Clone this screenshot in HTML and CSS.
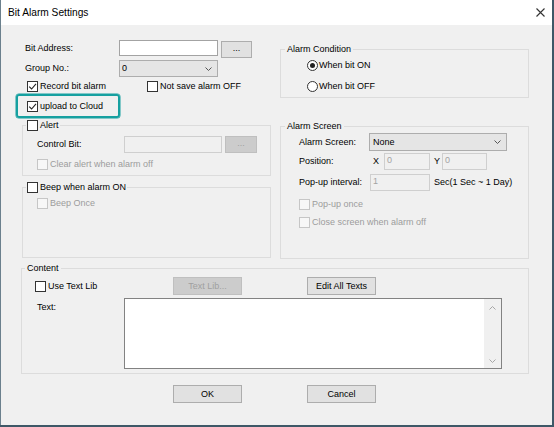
FILE: index.html
```html
<!DOCTYPE html>
<html>
<head>
<meta charset="utf-8">
<title>Bit Alarm Settings</title>
<link rel="stylesheet" href="styles.css">
</head>
<body>
<div class="window">
  <div class="titlebar">
    <span class="title">Bit Alarm Settings</span>
    <svg class="close" width="9" height="9" viewBox="0 0 9 9"><path d="M0.5 0.5L8.5 8.5M8.5 0.5L0.5 8.5" stroke="#333" stroke-width="1.1" fill="none"/></svg>
  </div>
  <div class="body">
    <div class="cols">
      <div class="lefttop">
        <div class="row r1">
          <span class="lbl w94">Bit Address:</span>
          <span class="input w99"></span>
          <span class="btn dots">...</span>
        </div>
        <div class="row r2">
          <span class="lbl w94">Group No.:</span>
          <span class="select w99"><span class="val">0</span><svg class="chev" width="7" height="4" viewBox="0 0 7 4"><path d="M0.5 0.5L3.5 3.5L6.5 0.5" stroke="#555" fill="none"/></svg></span>
        </div>
        <div class="row r3">
          <span class="chk first"><span class="cb"><svg width="9" height="9" viewBox="0 0 9 9"><path d="M1.2 4.6L3.6 7L8 1.8" stroke="#222" stroke-width="1.1" fill="none"/></svg></span>Record bit alarm</span>
          <span class="chk"><span class="cb"></span>Not save alarm OFF</span>
        </div>
        <div class="highlight">
          <span class="chk"><span class="cb"><svg width="9" height="9" viewBox="0 0 9 9"><path d="M1.2 4.6L3.6 7L8 1.8" stroke="#222" stroke-width="1.1" fill="none"/></svg></span>upload to Cloud</span>
        </div>
      </div>
      <fieldset class="grp cond">
        <legend>Alarm Condition</legend>
        <div class="gbody">
          <span class="radio"><span class="rb on"></span>When bit ON</span>
          <span class="radio second"><span class="rb"></span>When bit OFF</span>
        </div>
      </fieldset>
    </div>

    <div class="cols mid">
      <div class="leftmid">
        <fieldset class="grp alert">
          <legend><span class="chk"><span class="cb"></span>Alert</span></legend>
          <div class="gbody">
            <div class="row ctrl">
              <span class="lbl w87">Control Bit:</span>
              <span class="input dis w98"></span>
              <span class="btn disbtn dots2">...</span>
            </div>
            <div class="row clear">
              <span class="chk dis"><span class="cb"></span>Clear alert when alarm off</span>
            </div>
          </div>
        </fieldset>
        <fieldset class="grp beep">
          <legend><span class="chk"><span class="cb"></span>Beep when alarm ON</span></legend>
          <div class="gbody">
            <div class="row beeponce">
              <span class="chk dis"><span class="cb"></span>Beep Once</span>
            </div>
          </div>
        </fieldset>
      </div>
      <fieldset class="grp screen">
        <legend>Alarm Screen</legend>
        <div class="gbody">
          <div class="row s1">
            <span class="lbl w70">Alarm Screen:</span>
            <span class="select w138"><span class="val">None</span><svg class="chev" width="7" height="4" viewBox="0 0 7 4"><path d="M0.5 0.5L3.5 3.5L6.5 0.5" stroke="#555" fill="none"/></svg></span>
          </div>
          <div class="row s2">
            <span class="lbl w74">Position:</span>
            <span class="axis wx">X</span>
            <span class="input dis w46"><span class="dval">0</span></span>
            <span class="axis wy">Y</span>
            <span class="input dis w45"><span class="dval">0</span></span>
          </div>
          <div class="row s3">
            <span class="lbl w71">Pop-up interval:</span>
            <span class="input dis w60"><span class="dval">1</span></span>
            <span class="unit">Sec(1 Sec ~ 1 Day)</span>
          </div>
          <div class="row s4">
            <span class="chk dis"><span class="cb"></span>Pop-up once</span>
          </div>
          <div class="row s5">
            <span class="chk dis"><span class="cb"></span>Close screen when alarm off</span>
          </div>
        </div>
      </fieldset>
    </div>

    <fieldset class="grp content">
      <legend>Content</legend>
      <div class="gbody">
        <div class="row c1">
          <span class="chk w138c"><span class="cb"></span>Use Text Lib</span>
          <span class="btn disbtn w69">Text Lib...</span>
          <span class="btn w69 edit">Edit All Texts</span>
        </div>
        <div class="row c2">
          <span class="lbl w87 txtlbl">Text:</span>
          <div class="textarea">
            <div class="ta-main"></div>
            <div class="ta-scroll">
              <svg width="7" height="4" viewBox="0 0 7 4"><path d="M0.5 3.5L3.5 0.5L6.5 3.5" stroke="#a6a6a6" fill="none"/></svg>
              <svg width="7" height="4" viewBox="0 0 7 4"><path d="M0.5 0.5L3.5 3.5L6.5 0.5" stroke="#a6a6a6" fill="none"/></svg>
            </div>
          </div>
        </div>
      </div>
    </fieldset>

    <div class="buttons">
      <span class="btn w69">OK</span>
      <span class="btn w69 cancel">Cancel</span>
    </div>
  </div>
</div>
</body>
</html>
```

FILE: styles.css
```css
* { box-sizing: border-box; }
html, body { margin: 0; padding: 0; }
body {
  background: #3e5867;
  font-family: "Liberation Sans", Arial, sans-serif;
  font-size: 9px;
  line-height: 11px;
  color: #000;
  width: 554px;
  height: 427px;
  overflow: hidden;
}
.window {
  width: 552px;
  height: 425px;
  background: #f0f0f0;
  border-left: 1px solid #6b808d;
  display: flex;
  flex-direction: column;
}
.titlebar {
  height: 25px;
  flex: none;
  background: #fff;
  display: flex;
  align-items: center;
  justify-content: space-between;
  padding: 0 7px 0 7px;
}
.title { font-size: 10.2px; color: #000; }
.close { margin-top: -1px; }

.body { padding-left: 15px; }
.cols {
  display: grid;
  grid-template-columns: 255px 249px;
  column-gap: 9px;
  align-items: start;
}
.row { display: flex; align-items: center; }
.lbl { flex: none; }
.w94 { width: 94px; }
.w87 { width: 87px; }
.w70 { width: 70px; }
.w74 { width: 74px; }
.w71 { width: 71px; }
.w99 { width: 99px; }
.w98 { width: 98px; }
.w138 { width: 138px; }
.w46 { width: 46px; }
.w45 { width: 45px; }
.w60 { width: 60px; }
.w69 { width: 69px; }

.input {
  display: block;
  flex: none;
  height: 16px;
  background: #fff;
  border: 1px solid #a3a3a3;
}
.input.dis {
  background: #f0f0f0;
  border-color: #cfcfcf;
  height: 17px;
  color: #a3a3a3;
  padding: 1px 0 0 2px;
  line-height: 11px;
}
.select {
  display: flex;
  flex: none;
  align-items: center;
  justify-content: space-between;
  height: 17px;
  background: #e5e5e5;
  border: 1px solid #adadad;
  padding: 0 5px 0 2px;
}
.btn {
  display: flex;
  flex: none;
  align-items: center;
  justify-content: center;
  height: 18px;
  background: #e1e1e1;
  border: 1px solid #adadad;
  color: #000;
}
.btn.disbtn {
  background: #cccccc;
  border-color: #bfbfbf;
  color: #a0a0a0;
}

/* checkbox / radio */
.chk { display: inline-flex; align-items: center; flex: none; white-space: nowrap; }
.cb {
  display: inline-flex;
  align-items: center;
  justify-content: center;
  width: 11px;
  height: 11px;
  border: 1px solid #333;
  background: #fff;
  margin-right: 2px;
  flex: none;
}
.chk.dis { color: #9c9c9c; }
.chk.dis .cb { border-color: #c6c6c6; background: #f7f7f7; }
.radio { display: flex; align-items: center; white-space: nowrap; height: 11px; }
.rb {
  display: inline-flex;
  align-items: center;
  justify-content: center;
  width: 11px;
  height: 11px;
  border: 1px solid #333;
  border-radius: 50%;
  background: #fff;
  margin-right: 1px;
  flex: none;
}
.rb.on::after {
  content: "";
  width: 5px;
  height: 5px;
  border-radius: 50%;
  background: #222;
}

/* top-left */
.lefttop { padding-top: 15px; display: flex; flex-direction: column; }
.r1 { align-items: flex-start; padding-left: 9px; height: 17px; }
.r1 .lbl { line-height: 16px; }
.dots { width: 31px; height: 17px; margin-left: 3px; margin-top: 1px; padding-bottom: 3px; }
.r2 { padding-left: 9px; margin-top: 3px; height: 17px; }
.r3 { padding-left: 11px; margin-top: 4px; height: 11px; }
.chk.first { width: 120px; }
.highlight {
  margin-top: 2px;
  width: 104px;
  height: 24px;
  border: 2px solid #16a0a0;
  border-radius: 3px;
  box-shadow: 0 0 0 0.5px #16a0a0;
  padding-left: 9px;
  display: flex;
  align-items: center;
}

/* groups */
.grp {
  margin: 0;
  padding: 0;
  min-width: 0;
  border: 1px solid #dcdcdc;
}
.grp legend {
  padding: 0 2px;
  line-height: 12px;
  height: 12px;
  display: flex;
  align-items: center;
}
.cond {
  margin-top: 18px;
  padding: 5px 0 5px 0;
}
.cond .gbody { padding-left: 26px; }
.cond legend { margin-left: 4px; }
.radio.second { margin-top: 10px; }

.mid { margin-top: 1px; }
.leftmid { padding-left: 6px; }
.alert { padding: 5px 0 5px 0; }
.alert .gbody, .beep .gbody { padding-left: 14px; }
.alert legend, .beep legend { margin-left: 3px; padding: 0 1px; }
.ctrl { height: 17px; }
.dots2 { width: 32px; height: 17px; margin-left: 3px; padding-bottom: 3px; }
.clear { margin-top: 6px; height: 11px; }
.beep { margin-top: 5px; height: 77px; padding: 5px 0 0 0; }
.beeponce { height: 11px; }

.screen { margin-top: 1px; height: 139px; padding: 1px 0 0 0; }
.screen .gbody { padding-left: 18px; }
.screen legend { margin-left: 4px; }
.s1 { height: 18px; }
.s1 .select { height: 18px; }
.s1 .val { padding-left: 1px; }
.s2 { margin-top: 2px; height: 17px; }
.axis { flex: none; }
.wx { width: 11px; }
.wy { width: 8px; margin-left: 4px; }
.s3 { margin-top: 4px; height: 17px; }
.unit { margin-left: 4px; white-space: nowrap; }
.s4 { margin-top: 8px; height: 11px; }
.s5 { margin-top: 7px; height: 11px; }

.content {
  margin: 3px 0 0 5px;
  width: 508px;
  height: 112px;
  padding: 3px 0 0 0;
}
.content .gbody { padding-left: 13px; }
.content legend { margin-left: 3px; }
.c1 { height: 18px; }
.w138c { width: 138px; }
.edit { margin-left: 65px; }
.c2 { margin-top: 3px; align-items: flex-start; }
.txtlbl { margin-left: 2px; padding-top: 4px; }
.textarea {
  display: flex;
  width: 378px;
  height: 71px;
  border: 1px solid #828282;
  background: #fff;
}
.ta-main { flex: 1; }
.ta-scroll {
  width: 17px;
  background: #f0f0f0;
  display: flex;
  flex-direction: column;
  align-items: center;
  justify-content: space-between;
  padding: 7px 0 5px 0;
}

.buttons {
  display: flex;
  padding-left: 157px;
  margin-top: 11px;
}
.cancel { margin-left: 65px; }
```
